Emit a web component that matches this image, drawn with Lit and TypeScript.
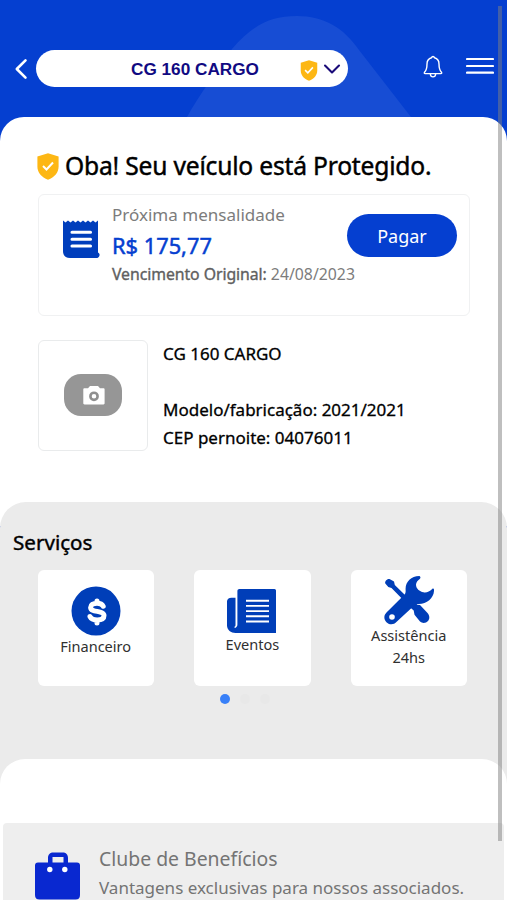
import { LitElement, html, css, svg } from "lit";
import { customElement } from "lit/decorators.js";

const shield = html`<svg class="shield" viewBox="0 0 22 27">
  <path fill="#fdb714" d="M11 .3 21.6 3.6V13.500C21.600 19.500 17.500 24.300 11 26.800 4.500 24.300.4 19.500.4 13.500V3.600Z" />
  <path fill="none" stroke="#fff" stroke-width="2" d="m6 13 3.500 3.500 6.500-7" />
</svg>`;

const coin = svg`<circle cx="25" cy="25" r="24.500" fill="#003eb8"/>
  <path fill="none" stroke="#fff" stroke-width="5" stroke-linecap="round" stroke-linejoin="round" d="M32.200 20.200C31 17.600 28.500 17.200 26 17.200c-4 0-6.400 1.700-6.400 4.200 0 5.600 13.400 2.400 13.400 8.200 0 2.900-2.800 4.400-6.800 4.400-3.500 0-6-.9-7.200-3.400M26 15v2M26 35v2"/>`;

const news = svg`<path fill="#003eb8" d="M12.500 3H47.500Q49 3 49 4.500V47H8.500C4 47 0 44 0 39.500V15.500C0 13 1.700 11.700 4.500 11.700H8.500V39c0 1-.4 1.500-1.200 2l.6 1C9.600 41.300 10.400 40.200 10.400 38.500V5C10.400 3.700 11.200 3 12.500 3Z"/>
  <path stroke="#fff" stroke-width="1.900" d="M19 14.700H42M19 19.900H42M19 25.100H42M19 30.300H42M19 35.500H42"/>`;

const tools = svg`<g fill="#003eb8" stroke-linejoin="round">
  <path d="M1.300 8.500C.5 6.500 3 3.500 5.500 4L10 6.500 10.800 10 21.500 20.500 18.300 24 7.500 13 4.300 12Z"/>
  <path d="m24 30.500 5-4.500 4.500 3.700 2.500.3L43.500 38c2.500 3 2.200 6 .5 8-2 2.300-5.700 2.600-8 .5L30.500 39.800l-.8-4.300Z"/>
  <path d="M35.500.9C27 .8 21.200 7 21.600 14.500c.1 2.500 0 3.800-1 4.900L2.500 37.600c-2.900 3-2.900 7 .2 9.800 3 2.700 7 2.600 9.700-.3L30.500 30.300c1-1 2-1.400 4.200-1.200C43.500 29 50.500 22.500 50 14.500c-.1-1-1.100-1.200-1.800-.5-2.700 2.500-5.700 4-8.700 3.300C35.500 16.600 32 13.500 32 9.800c0-2.800 2-4.600 4-6.100.8-.8.5-2.300-.5-2.800Z"/>
  </g><circle cx="8" cy="42" r="2.800" fill="#fff"/>`;

const services = [
  { cls: "financeiro", icon: coin, label: html`Financeiro` },
  { cls: "eventos", icon: news, label: html`Eventos` },
  { cls: "assistencia", icon: tools, label: html`Assistência<br />24hs` },
];

@customElement("app-root")
export class AppRoot extends LitElement {
  static styles = css`
    :host {
      display: block;
      position: relative;
      height: 900px;
      overflow: hidden;
      background: #053fd0;
      font-family: "Noto Sans", "Open Sans", sans-serif;
      color: #000;
    }
    * { box-sizing: border-box; }
    svg { display: block; flex: none; }
    .hill { position: absolute; left: 180px; top: 0; width: 240px; height: 117px; }
    .header { position: relative; height: 117px; padding: 50px 13px 0 14px; display: flex; align-items: flex-start; }
    .back { width: 14px; height: 22px; margin: 8px 8px 0 0; }
    .select { width: 312px; height: 37px; border-radius: 19px; background: #fff; display: flex; align-items: center; }
    .selected { width: 127px; margin: 0 0 0 95px; white-space: nowrap; font: bold 17.200px/20px "Liberation Sans", sans-serif; color: #110a82; }
    .select .shield { width: 18px; height: 21px; margin: 4px 0 0 42px; }
    .chevron { width: 18px; height: 12px; margin: 1px 0 0 5px; }
    .bell { width: 20px; height: 24px; margin: 5px 0 0 75px; }
    .menu { width: 28px; height: 18px; margin: 7px 0 0 23px; }
    .sheet { position: relative; height: 409px; margin-bottom: -24px; padding: 34px 37px 0; background: #fff; border-radius: 24px 24px 0 0; }
    .status { display: flex; height: 43px; }
    .status .shield { width: 22px; height: 27px; margin-top: 2px; }
    .title { margin-left: 6px; font-size: 24.600px; letter-spacing: -.19px; line-height: 29px; white-space: nowrap; -webkit-text-stroke: .45px #000; }
    .bill { width: 432px; height: 122px; margin-left: 1px; border: 1.500px solid #f0f1f2; border-radius: 6px; display: flex; padding: 0 12px 0 23px; }
    .receipt { width: 38px; height: 39px; margin: 24px 12px 0 0; }
    .due { width: 235px; white-space: nowrap; color: #7c7c7c; padding-top: 8px; }
    .label { font-size: 17.050px; line-height: 24px; }
    .price { font-size: 21.800px; line-height: 36px; padding-top: 1px; margin-bottom: -1px; color: #053fd0; -webkit-text-stroke: .5px #053fd0; }
    .date { font-size: 15.800px; line-height: 22px; }
    .strong { color: #606060; letter-spacing: -.06px; -webkit-text-stroke: .35px #606060; }
    .pay { width: 110px; height: 43px; margin-top: 19px; padding-top: 1px; border-radius: 22px; background: #053fd0; color: #fff; font-size: 18px; line-height: 43px; text-align: center; }
    .vehicle { display: flex; margin: 24px 0 0 1px; }
    .photo { width: 110px; height: 111px; border: 1.500px solid #e9ebec; border-radius: 6px; display: flex; align-items: center; justify-content: center; }
    .camera { width: 58px; height: 42px; margin: -1px 0 0 0; }
    .facts { margin-left: 15px; font-size: 17px; line-height: 28px; white-space: nowrap; -webkit-text-stroke: .3px #000; }
    .model { margin-bottom: 28px; }
    .services { position: relative; height: 282px; margin-bottom: -25px; background: #ebebeb; border-radius: 26px 26px 0 0; padding: 25px 13px 0; }
    .heading { font-size: 20.600px; line-height: 30px; -webkit-text-stroke: .4px #000; }
    .cards { display: flex; gap: 40px; margin: 13px 0 0 25px; }
    .card { width: 116.300px; height: 116px; background: #fff; border-radius: 6px; display: flex; flex-direction: column; align-items: center; flex: none; text-align: center; color: #303030; font-size: 14.550px; line-height: 22px; }
    .card svg { width: 50px; height: 50px; }
    .financeiro { padding-top: 16px; }
    .financeiro .caption { margin: -1px 0 0 -1px; }
    .eventos { padding-top: 16px; }
    .eventos .caption { margin-top: -3px; }
    .assistencia { padding-top: 5px; }
    .assistencia .caption { margin-top: -1px; }
    .dots { display: flex; gap: 10px; margin: 8px 0 0 206.500px; }
    .dot { width: 10px; height: 10px; border-radius: 50%; background: #e8e8e8; }
    .on { background: #3880f8; }
    .bottom { position: relative; height: 141px; background: #fff; border-radius: 25px 25px 0 0; padding: 64px 3px 0; }
    .club { height: 90px; background: #eee; border-radius: 4px 4px 0 0; display: flex; padding: 23px 0 0 32px; }
    .bag { width: 45px; height: 54px; margin-top: 4px; }
    .perks { margin-left: 19px; color: #747474; white-space: nowrap; }
    .name { font-size: 19.400px; line-height: 26px; }
    .note { font-size: 17px; line-height: 32px; }
    .scroll { position: absolute; left: 498px; top: 6px; width: 4px; height: 835px; background: rgba(128, 128, 128, .5); }
  `;

  render() {
    return html`
      <svg class="hill" viewBox="0 0 240 117"><path fill="#174dd4" d="M7 117C20 93 35 75 52 49 71 27 88 16 117 16c27 0 47 12 62 34L231 117Z" /></svg>
      <div class="header">
        <svg class="back" viewBox="0 0 14 22"><path d="M11.500 2.300 2.800 11l8.700 8.700" fill="none" stroke="#fff" stroke-width="2.600" stroke-linecap="round" stroke-linejoin="round" /></svg>
        <div class="select">
          <div class="selected">CG 160 CARGO</div>
          ${shield}
          <svg class="chevron" viewBox="0 0 18 12"><path d="m2 2.500 7 7 7-7" fill="none" stroke="#190a78" stroke-width="2.100" stroke-linecap="round" stroke-linejoin="round" /></svg>
        </div>
        <svg class="bell" viewBox="0 0 20 24" fill="none" stroke="#fff" stroke-width="1.400" stroke-linejoin="round" stroke-linecap="round">
          <path d="M10 1.500c-.9 0-1.300.6-1.500 1.300C5.500 3.600 4 6 4 9c0 4.500-.8 6.500-2.500 8.300-.5.700-.2 1.300.6 1.300h15.800c.8 0 1.100-.6.600-1.300C16.800 15.500 16 13.500 16 9c0-3-1.500-5.400-4.500-6.200-.2-.7-.6-1.300-1.500-1.300ZM7.300 19c.2 1.800 1.300 2.900 2.700 2.900s2.500-1.100 2.700-2.900" />
        </svg>
        <svg class="menu" viewBox="0 0 28 18"><path d="M1 2h26M1 9h26M1 15.700h26" stroke="#fff" stroke-width="2.200" stroke-linecap="round" /></svg>
      </div>
      <div class="sheet">
        <div class="status">${shield}<div class="title">Oba! Seu veículo está Protegido.</div></div>
        <div class="bill">
          <svg class="receipt" viewBox="0 0 38 39">
            <path fill="#003ebc" d="M1 1.500 3.500 3.500 6 1.500 8.500 3.500 11 1.500 13.500 3.500 16 1.500 18.500 3.500 21 1.500 23.500 3.500 26 1.500 28.500 3.500 31 1.500 33.500 3.500 36 1.500V33.500C37.600 34.500 38 35.800 37.200 37.200 36.700 38.400 35.800 39 34.500 39H8C3.500 39 1 36.500 1 32Z" />
            <path d="M10 13.300h18.500M10 20.200h18.500M10 27h18.500" stroke="#fff" stroke-width="3.100" stroke-linecap="round" />
          </svg>
          <div class="due">
            <div class="label">Próxima mensalidade</div>
            <div class="price">R$ 175,77</div>
            <div class="date"><span class="strong">Vencimento Original:</span> 24/08/2023</div>
          </div>
          <div class="pay">Pagar</div>
        </div>
        <div class="vehicle">
          <div class="photo">
            <svg class="camera" viewBox="0 0 58 42">
              <rect width="58" height="42" rx="17" fill="#969696" />
              <path fill="#fff" d="M20.500 14.200H24l2-2.200h8l2 2.200h3.500c.7 0 1.100.4 1.100 1.100v14c0 .7-.4 1.200-1.100 1.200h-19c-.7 0-1.200-.5-1.200-1.200v-14c0-.7.5-1.100 1.200-1.100Z" />
              <circle cx="30" cy="22.300" r="3.600" fill="#fff" stroke="#8f8f8f" stroke-width="2.600" />
            </svg>
          </div>
          <div class="facts">
            <div class="model">CG 160 CARGO</div>
            <div class="made">Modelo/fabricação: 2021/2021</div>
            <div class="zip">CEP pernoite: 04076011</div>
          </div>
        </div>
      </div>
      <div class="services">
        <div class="heading">Serviços</div>
        <div class="cards">
          ${services.map((s) => html`<div class="card ${s.cls}"><svg viewBox="0 0 50 50">${s.icon}</svg><div class="caption">${s.label}</div></div>`)}
        </div>
        <div class="dots"><i class="dot on"></i><i class="dot"></i><i class="dot"></i></div>
      </div>
      <div class="bottom">
        <div class="club">
          <svg class="bag" viewBox="0 0 45 54">
            <path fill="#0928d0" fill-rule="evenodd" d="M13 12.500V8c0-3.500 2-5.500 5.500-5.500h9C31 2.500 33 4.500 33 8v4.500h9c2 0 3 1 3 3V45c0 3-1.500 4.500-4.500 4.500h-36C1.500 49.500 0 48 0 45V15.500c0-2 1-3 3-3ZM17.500 12.500h11V7h-11Z" />
            <circle cx="14.800" cy="19.500" r="2.700" fill="#fff" /><circle cx="29.800" cy="19.500" r="2.700" fill="#fff" />
          </svg>
          <div class="perks"><div class="name">Clube de Benefícios</div><div class="note">Vantagens exclusivas para nossos associados.</div></div>
        </div>
      </div>
      <div class="scroll"></div>
    `;
  }
}
